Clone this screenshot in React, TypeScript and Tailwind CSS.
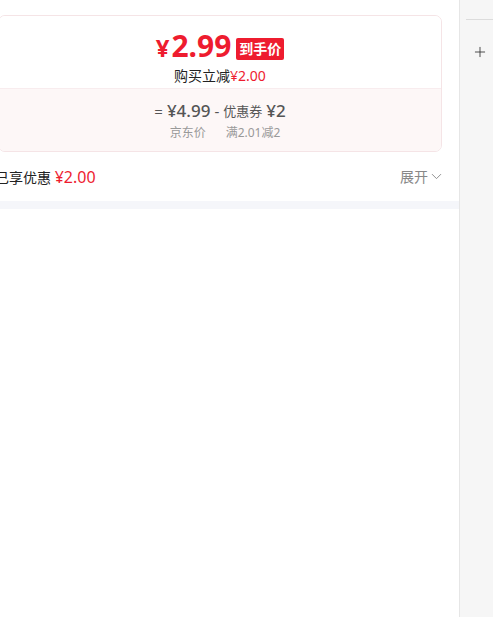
import { ChevronDown, Plus } from 'lucide-react'

const font = "font-['Noto_Sans','Noto_Sans_CJK_SC',sans-serif]"

export default function App() {
  return (
    <div className={`flex h-[617px] w-[493px] overflow-hidden bg-white ${font}`}>
      <div className="flex w-[459px] shrink-0 flex-col">
        <div className="-ml-[19px] w-[478px] px-[17px] pt-[15px]">
          {/* 价格卡片 */}
          <div className="overflow-hidden rounded-[7px] border border-[#f5e4e6] bg-white">
            <div className="flex h-[72px] flex-col items-center bg-white pt-[13px]">
              <div className="flex items-center">
                <span className="text-[30px] font-bold leading-[34px] text-[#ee1c2f]">
                  <span className="mr-[2px] text-[24px]">¥</span>2.99
                </span>
                <span className="ml-[5px] mt-[3px] rounded-[2px] bg-[#ee1c2f] px-[3px] text-[14px] font-bold leading-[22px] text-white">到手价</span>
              </div>
              <div className="mt-[1px] text-[14px] leading-[20px] text-[#222]">
                购买立减<span className="text-[#ee1c2f]">¥2.00</span>
              </div>
            </div>
            <div className="flex h-[63px] flex-col items-center border-t border-[#f8ecee] bg-[#fdf7f7] pt-[11px]">
              <div className="flex items-center gap-[4px] text-[#555]">
                <span className="text-[15px]">=</span>
                <span className="text-[17px] font-medium leading-[22px]">¥4.99</span>
                <span className="text-[15px]">-</span>
                <span className="text-[13px]">优惠券</span>
                <span className="text-[17px] font-medium leading-[22px]">¥2</span>
              </div>
              <div className="mt-[2px] flex gap-[20px] pl-[10px] text-[12px] leading-[16px] text-[#999]">
                <span>京东价</span>
                <span>满2.01减2</span>
              </div>
            </div>
          </div>

          <div className="flex h-[49px] items-center justify-between">
            <div className="-ml-[3px] text-[14px] text-[#222]">
              已享优惠 <span className="text-[16px] text-[#ee1c2f]">¥2.00</span>
            </div>
            <div className="flex items-center text-[14px] text-[#888]">
              展开
              <ChevronDown className="-mr-[3px] h-[17px] w-[17px]" strokeWidth={1.3} />
            </div>
          </div>
        </div>
        <div className="h-[8px] bg-[#f5f6fa]" />
        <div className="flex-1 bg-white" />
      </div>

      {/* 右侧栏 */}
      <div className="flex flex-1 flex-col border-l border-[#e6e6e6] bg-[#f6f6f6]">
        <div className="ml-[6px] mt-[19px] h-px bg-[#dcdcdc]" />
        <div className="mt-[24px] flex justify-center pl-[6px] text-[#333]">
          <Plus className="h-[16px] w-[16px]" strokeWidth={1.3} />
        </div>
      </div>
    </div>
  )
}
